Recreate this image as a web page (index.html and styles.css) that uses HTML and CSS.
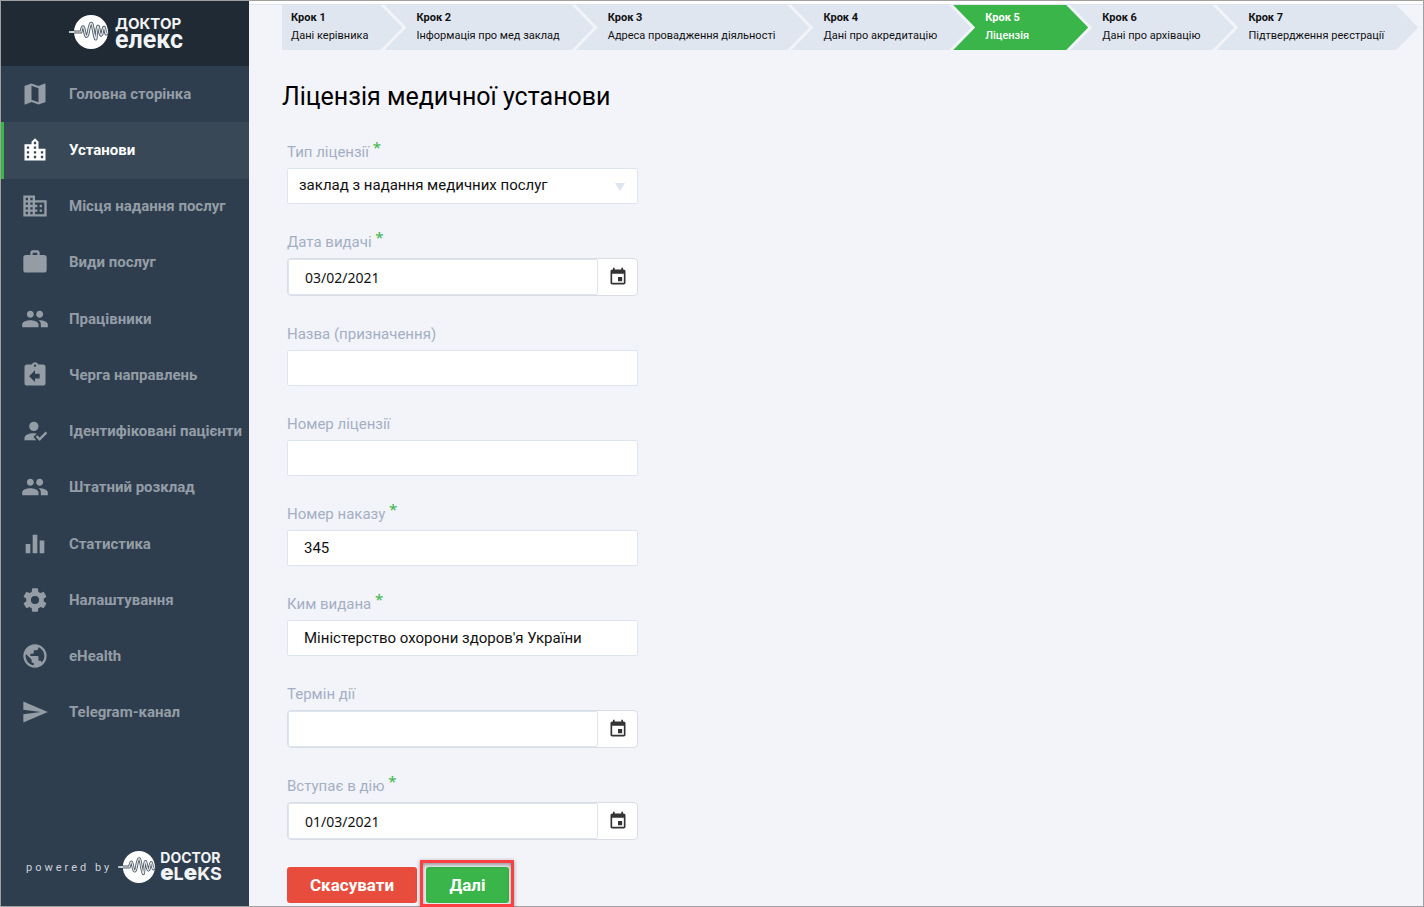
FILE: index.html
```html
<!DOCTYPE html>
<html lang="uk">
<head>
<meta charset="utf-8">
<title>Ліцензія медичної установи</title>
<link rel="stylesheet" href="styles.css">
</head>
<body>
<svg class="sprite" aria-hidden="true">
  <symbol id="i-pulse" viewBox="0 0 40 36">
    <circle cx="22" cy="18" r="17" fill="#fff"/>
    <path d="M0 18H8" fill="none" stroke="#c5cbd1" stroke-width="2"/>
    <path d="M5 18H12Q14 8 15.500 17T19 20Q22 2 24 14T27 25Q28.500 6 30 15T33 20Q35 9 36 16T38.500 18" fill="none" stroke="#4f5c68" stroke-width="3" stroke-linejoin="round"/>
    <path d="M3 18H12Q14 8 15.500 17T19 20Q22 2 24 14T27 25Q28.500 6 30 15T33 20Q35 9 36 16T38.500 18" fill="none" stroke="#e6e9ec" stroke-width="1.200" stroke-linejoin="round"/>
  </symbol>
  <symbol id="i-people" viewBox="0 0 24 24"><path d="M16 11c1.66 0 2.99-1.34 2.99-3S17.66 5 16 5s-3 1.34-3 3 1.34 3 3 3zm-8 0c1.66 0 2.99-1.34 2.99-3S9.66 5 8 5 5 6.340 5 8s1.340 3 3 3zm0 2c-2.330 0-7 1.170-7 3.500V19h14v-2.500c0-2.330-4.670-3.500-7-3.500zm8 0c-.290 0-.620.020-.970.050 1.160.840 1.970 1.970 1.970 3.450V19h6v-2.500c0-2.330-4.670-3.500-7-3.500z"/></symbol>
  <symbol id="i-date" viewBox="0 0 24 24"><path d="M17 12h-5v5h5v-5zM16 1v2H8V1H6v2H5c-1.110 0-1.990.9-1.990 2L3 19c0 1.100.890 2 2 2h14c1.100 0 2-.9 2-2V5c0-1.100-.9-2-2-2h-1V1h-2zm3 18H5V8h14v11z"/></symbol>
</svg>
<div class="page">
  <aside class="sidebar">
    <div class="brand">
      <svg class="brand-mark"><use href="#i-pulse"/></svg>
      <div class="brand-name"><span class="brand-top">ДОКТОР</span><span class="brand-low">елекс</span></div>
    </div>
    <nav>
      <ul class="menu">
        <li><a href="#"><svg viewBox="0 0 24 24"><path d="M20.500 3l-.160.030L15 5.100 9 3 3.360 4.900c-.210.070-.360.250-.360.480V20.500c0 .280.220.5.500.5l.160-.030L9 18.900l6 2.100 5.640-1.900c.210-.070.360-.250.360-.480V3.500c0-.280-.220-.5-.5-.5zM15 19l-6-2.110V5l6 2.110V19z"/></svg>Головна сторінка</a></li>
        <li><a class="active" href="#"><svg viewBox="0 0 24 24"><path d="M15 11V5l-3-3-3 3v2H3v14h18V11h-6zm-8 8H5v-2h2v2zm0-4H5v-2h2v2zm0-4H5V9h2v2zm6 8h-2v-2h2v2zm0-4h-2v-2h2v2zm0-4h-2V9h2v2zm0-4h-2V5h2v2zm6 12h-2v-2h2v2zm0-4h-2v-2h2v2z"/></svg>Установи</a></li>
        <li><a href="#"><svg viewBox="0 0 24 24"><path d="M12 7V3H2v18h20V7H12zM6 19H4v-2h2v2zm0-4H4v-2h2v2zm0-4H4V9h2v2zm0-4H4V5h2v2zm4 12H8v-2h2v2zm0-4H8v-2h2v2zm0-4H8V9h2v2zm0-4H8V5h2v2zm10 12h-8v-2h2v-2h-2v-2h2v-2h-2V9h8v10zm-2-8h-2v2h2v-2zm0 4h-2v2h2v-2z"/></svg>Місця надання послуг</a></li>
        <li><a href="#"><svg viewBox="0 0 24 24"><path d="M20 6h-4V4c0-1.110-.890-2-2-2h-4c-1.110 0-2 .890-2 2v2H4c-1.110 0-1.990.890-1.990 2L2 19c0 1.110.890 2 2 2h16c1.110 0 2-.890 2-2V8c0-1.110-.890-2-2-2zm-6 0h-4V4h4v2z"/></svg>Види послуг</a></li>
        <li><a href="#"><svg><use href="#i-people"/></svg>Працівники</a></li>
        <li><a href="#"><svg viewBox="0 0 24 24"><path d="M19 3h-4.180C14.400 1.840 13.300 1 12 1s-2.400.840-2.820 2H5c-1.100 0-2 .9-2 2v14c0 1.100.9 2 2 2h14c1.100 0 2-.9 2-2V5c0-1.100-.9-2-2-2zm-7 0c.550 0 1 .450 1 1s-.450 1-1 1-1-.450-1-1 .450-1 1-1zm4 12h-4v3l-5-5 5-5v3h4v4z"/></svg>Черга направлень</a></li>
        <li><a href="#"><svg viewBox="0 0 24 24"><path d="M21.100 12.500l1.400 1.410-6.530 6.590L12.500 17l1.400-1.410 2.070 2.080 5.130-5.170M11 4a4 4 0 1 1 0 8 4 4 0 0 1 0-8m0 10c.680 0 1.500.090 2.410.260L10.670 17l2.330 3H3v-2c0-2.210 3.580-4 8-4z"/></svg>Ідентифіковані пацієнти</a></li>
        <li><a href="#"><svg><use href="#i-people"/></svg>Штатний розклад</a></li>
        <li><a href="#"><svg viewBox="0 0 24 24"><path d="M10 20h4V4h-4v16zm-6 0h4v-8H4v8zM16 9v11h4V9h-4z"/></svg>Статистика</a></li>
        <li><a href="#"><svg viewBox="0 0 24 24"><path d="M12 15.500A3.500 3.500 0 0 1 8.500 12 3.500 3.500 0 0 1 12 8.500a3.500 3.500 0 0 1 3.500 3.500 3.500 3.500 0 0 1-3.500 3.500m7.430-2.530c.040-.320.070-.640.070-.970s-.030-.660-.070-1l2.110-1.630c.190-.150.240-.420.120-.640l-2-3.460c-.120-.220-.390-.310-.610-.220l-2.490 1c-.520-.390-1.060-.730-1.690-.980l-.370-2.650A.506.506 0 0 0 14 2h-4c-.250 0-.460.180-.5.420l-.370 2.650c-.630.250-1.170.590-1.690.980l-2.490-1c-.220-.090-.490 0-.610.220l-2 3.460c-.130.220-.070.490.120.640L4.570 11c-.040.340-.070.670-.070 1s.030.650.070.970l-2.110 1.660c-.190.150-.250.420-.120.640l2 3.460c.120.220.390.300.610.220l2.490-1.010c.520.400 1.060.740 1.690.990l.370 2.650c.040.240.250.420.5.420h4c.250 0 .460-.180.500-.420l.370-2.650c.630-.260 1.170-.590 1.690-.990l2.490 1.010c.220.080.490 0 .610-.220l2-3.460c.120-.220.070-.490-.120-.640l-2.110-1.660z"/></svg>Налаштування</a></li>
        <li><a href="#"><svg viewBox="0 0 24 24"><path d="M12 2C6.480 2 2 6.480 2 12s4.480 10 10 10 10-4.480 10-10S17.520 2 12 2zm-1 17.930c-3.950-.490-7-3.850-7-7.930 0-.620.080-1.210.210-1.790L9 15v1c0 1.100.9 2 2 2v1.930zm6.900-2.540c-.260-.810-1-1.390-1.900-1.390h-1v-3c0-.550-.450-1-1-1H8v-2h2c.550 0 1-.450 1-1V7h2c1.100 0 2-.9 2-2v-.410c2.930 1.190 5 4.060 5 7.410 0 2.080-.8 3.970-2.100 5.390z"/></svg>eHealth</a></li>
        <li><a href="#"><svg viewBox="0 0 24 24"><path d="M2.010 21L23 12 2.010 3 2 10l15 2-15 2z"/></svg>Telegram-канал</a></li>
      </ul>
    </nav>
    <div class="powered">
      <span class="powered-by">powered by</span>
      <svg class="brand-mark"><use href="#i-pulse"/></svg>
      <div class="brand-name"><span class="brand-top">DOCTOR</span><span class="brand-mix"><b>e</b>L<b>e</b>KS</span></div>
    </div>
  </aside>
  <main class="content">
    <ol class="steps">
      <li><strong>Крок 1</strong><span>Дані керівника</span></li>
      <li><strong>Крок 2</strong><span>Інформація про мед заклад</span></li>
      <li><strong>Крок 3</strong><span>Адреса провадження діяльності</span></li>
      <li><strong>Крок 4</strong><span>Дані про акредитацію</span></li>
      <li class="current" aria-current="step"><strong>Крок 5</strong><span>Ліцензія</span></li>
      <li><strong>Крок 6</strong><span>Дані про архівацію</span></li>
      <li><strong>Крок 7</strong><span>Підтвердження реєстрації</span></li>
    </ol>
    <h1>Ліцензія медичної установи</h1>
    <form class="form">
      <label for="type">Тип ліцензії <i>*</i></label>
      <div class="select"><select id="type"><option>заклад з надання медичних послуг</option></select></div>
      <label for="issued">Дата видачі <i>*</i></label>
      <div class="date"><input id="issued" type="text" value="03/02/2021"><button type="button" aria-label="Обрати дату"><svg><use href="#i-date"/></svg></button></div>
      <label for="name">Назва (призначення)</label>
      <input class="text" id="name" type="text">
      <label for="number">Номер ліцензії</label>
      <input class="text" id="number" type="text">
      <label for="order">Номер наказу <i>*</i></label>
      <input class="text" id="order" type="text" value="345">
      <label for="issuer">Ким видана <i>*</i></label>
      <input class="text" id="issuer" type="text" value="Міністерство охорони здоров'я України">
      <label for="term">Термін дії</label>
      <div class="date"><input id="term" type="text"><button type="button" aria-label="Обрати дату"><svg><use href="#i-date"/></svg></button></div>
      <label for="start">Вступає в дію <i>*</i></label>
      <div class="date"><input id="start" type="text" value="01/03/2021"><button type="button" aria-label="Обрати дату"><svg><use href="#i-date"/></svg></button></div>
      <div class="actions">
        <button class="btn cancel" type="button">Скасувати</button>
        <button class="btn next" type="submit">Далі</button>
      </div>
    </form>
  </main>
</div>
</body>
</html>
```
FILE: styles.css
```css
* { box-sizing: border-box; }
body { margin: 0; font-family: Roboto, sans-serif; background: #f3f4f9; color: #111; }
.sprite { position: absolute; width: 0; height: 0; }
svg { fill: currentColor; flex: none; }
button, input, select { font: inherit; color: inherit; }

.page { display: flex; min-height: 100vh; border: 1px solid #a0a0a0; }

.sidebar { flex: none; width: 248px; display: flex; flex-direction: column; background: #2e3e4e; }
.brand { display: flex; align-items: center; gap: 6px; height: 65px; padding: 0 0 3px 68px; background: #1f2a35; color: #f2f3f4; }
.brand-mark { width: 40px; height: 36px; }
.brand-name { display: flex; flex-direction: column; font-weight: 700; }
.brand-top { font-family: Inter, sans-serif; font-size: 15px; line-height: 18px; }
.brand-low { font-size: 25px; line-height: 14px; padding-bottom: 2px; }
.menu { display: grid; grid-auto-rows: 1fr; min-height: 675px; margin: 0; padding: 0; list-style: none; }
.menu a { display: flex; align-items: center; gap: 20px; height: 100%; padding: 0 0 1px 20px; color: #949da6; font-size: 15px; font-weight: 700; text-decoration: none; white-space: nowrap; }
.menu svg { width: 28px; height: 28px; }
.menu .active { padding-left: 17px; border-left: 3px solid #39b54a; background: #394856; color: #fff; }
.powered { display: flex; align-items: center; margin-top: auto; padding: 0 0 22px 25px; color: #f2f3f4; }
.powered-by { margin-right: 6px; font-size: 11px; letter-spacing: 3px; color: #cdd2d7; }
.powered .brand-mark { width: 38px; height: 34px; }
.powered .brand-name { margin-left: 4px; }
.powered .brand-top { font-size: 14px; line-height: 16px; }
.brand-mix { font-family: Inter, sans-serif; font-size: 18px; line-height: 16px; padding-bottom: 2px; }
.brand-mix b { font-size: 22px; line-height: 12px; }

.content { flex: 1; min-width: 0; border-top: 3px solid #fff; }
.steps { display: flex; margin: 0; padding: 0 0 0 33px; border-top: 1px solid #dfe5f0; list-style: none; }
.steps li { display: flex; flex-direction: column; padding: 4px 34px 5px 32px; background: #e0e6f0; font-size: 11px; line-height: 18px; white-space: nowrap; clip-path: polygon(0 0, calc(100% - 22px) 0, 100% 50%, calc(100% - 22px) 100%, 0 100%, 22px 50%); }
.steps li + li { margin-left: -18px; }
.steps li:first-child { padding-left: 9px; clip-path: polygon(0 0, calc(100% - 22px) 0, 100% 50%, calc(100% - 22px) 100%, 0 100%); }
.steps .current { min-width: 135px; background: #39b54a; color: #fff; font-weight: 500; }

h1 { margin: 31px 0 1px 33px; font-size: 25px; line-height: 32px; font-weight: 400; color: #000; }
.form { display: flex; flex-direction: column; width: 351px; margin: 0 0 3px 38px; font-size: 15px; }
.form label { padding: 28px 0 6px; line-height: 20px; font-size: 15px; color: #a3afc4; }
.form label i { position: relative; top: -4px; line-height: 1px; font-family: "Noto Sans", sans-serif; font-style: normal; color: #39b54a; }
.text, select { width: 100%; height: 36px; border: 1px solid #dfe5f0; border-radius: 2px; background: #fff; }
.text { padding: 0 16px; }
.select { position: relative; }
select { padding: 0 11px 2px; appearance: none; }
.select::after { content: ""; position: absolute; right: 13px; top: 15px; border: 5px solid transparent; border-top: 8px solid #dfe5f0; border-bottom: 0; }
.date { display: flex; height: 38px; border: 1px solid #dadde4; border-radius: 4px; background: #fff; }
.date input { flex: 1; min-width: 0; padding: 0 16px; border: 1px solid #dfe5f0; border-radius: 2px; background: #fff; font-family: "Noto Sans", sans-serif; font-size: 14px; }
.date button { display: flex; align-items: center; justify-content: center; width: 39px; padding: 0; border: 0; background: none; color: #333; }
.date svg { width: 20px; height: 20px; }
.actions { display: flex; gap: 9px; margin-top: 27px; }
.btn { height: 36px; border: 0; border-radius: 3px; color: #fff; font-size: 17px; font-weight: 700; padding: 0 23px; }
.cancel { background: #e84c3d; }
.next { position: relative; min-width: 83px; background: #39b54a; }
.next::after { content: ""; position: absolute; inset: -7px -5px -4px -6px; border: 3px solid #fb3f42; box-shadow: 0 1px 4px rgba(0, 0, 0, .4), inset 0 2px 4px rgba(0, 0, 0, .4); }
```
